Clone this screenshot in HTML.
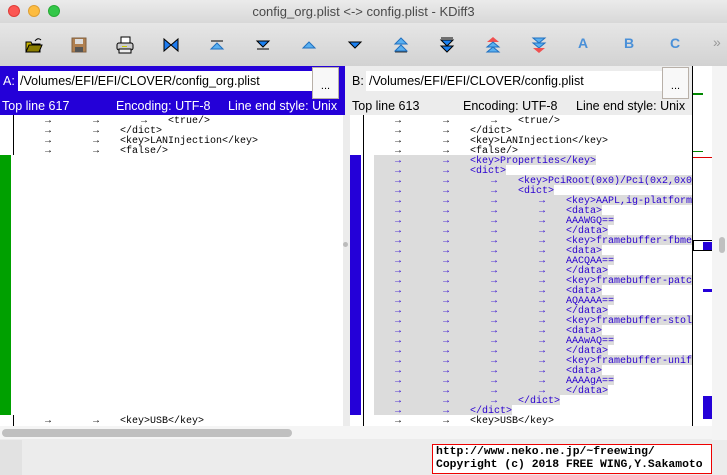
<!DOCTYPE html>
<html><head><meta charset="utf-8"><style>
*{margin:0;padding:0;box-sizing:border-box}
body{width:727px;height:475px;overflow:hidden;background:#ececec;font-family:"Liberation Sans",sans-serif;position:relative}
.abs{position:absolute}
#title{left:0;top:0;width:727px;height:23px;background:linear-gradient(#ebebeb,#d8d8d8);text-align:center;font-size:13px;color:#4a4a4a;line-height:23px}
.dot{position:absolute;top:5px;width:12px;height:12px;border-radius:50%}
#tb{left:0;top:23px;width:727px;height:43px;background:linear-gradient(#e6e6e6,#d2d2d2)}
.ic{position:absolute;top:13px;width:18px;height:18px}
.pane{position:absolute;top:115px;height:311px;overflow:hidden;background:#fff}
.r{position:absolute;white-space:pre;font-family:"Liberation Mono",monospace;font-size:10px;line-height:14px;height:10px;color:#000}
.r i{display:inline-block;width:48px;text-align:center;font-style:normal;font-size:10px;font-weight:bold;vertical-align:top}
.h{background:#dcdcdc;color:#2a00d0}
.hdr{font-size:12.5px;position:absolute;white-space:nowrap}
.in{position:absolute;left:0;top:0;width:100%;height:311px}
</style></head><body>
<div id="title" class="abs">config_org.plist &lt;-&gt; config.plist - KDiff3
<div class="dot" style="left:8px;background:#fc5753;border:1px solid #df3d38"></div>
<div class="dot" style="left:28px;background:#fdbc40;border:1px solid #de9f34"></div>
<div class="dot" style="left:48px;background:#33c748;border:1px solid #27aa35"></div>
</div>
<div id="tb" class="abs">
<svg class="ic" style="left:25px" viewBox="0 0 18 18"><path d="M1 6h5l1 2h8v8H1z" fill="#c8b400" stroke="#000"/><path d="M1 16l3-7h13l-3 7z" fill="#8a7d00" stroke="#000"/><path d="M10 5q3-4 6-1" stroke="#000" fill="none"/></svg>
<svg class="ic" style="left:70px" viewBox="0 0 18 18"><rect x="2" y="2" width="14" height="14" fill="#b08050" stroke="#806040"/><rect x="5" y="3" width="8" height="5" fill="#ddd"/><rect x="5" y="11" width="8" height="5" fill="#555"/></svg>
<svg class="ic" style="left:116px" viewBox="0 0 18 18"><rect x="5" y="1" width="9" height="6" fill="#fff" stroke="#000"/><rect x="1" y="7" width="16" height="7" rx="2" fill="#ccc" stroke="#000"/><rect x="3" y="13" width="12" height="4" fill="#eee" stroke="#000"/><rect x="6" y="10" width="5" height="1" fill="#cc0"/></svg>
<svg class="ic" style="left:162px" viewBox="0 0 18 18"><path d="M2 3v12l7-6zM16 3v12l-7-6z" fill="#1e7cf0" stroke="#000"/></svg>
<svg class="ic" style="left:208px" viewBox="0 0 18 18"><path d="M3 5h12" stroke="#000"/><path d="M9 7l6 6H3z" fill="#5ab0f0" stroke="#2070c0"/></svg>
<svg class="ic" style="left:254px" viewBox="0 0 18 18"><path d="M3 13h12" stroke="#000"/><path d="M3 5h12l-6 6z" fill="#1a80f0" stroke="#000"/></svg>
<svg class="ic" style="left:300px" viewBox="0 0 18 18"><path d="M9 6l6 6H3z" fill="#5ab0f0" stroke="#2070c0"/></svg>
<svg class="ic" style="left:346px" viewBox="0 0 18 18"><path d="M3 6h12l-6 6z" fill="#1a80f0" stroke="#000"/></svg>
<svg class="ic" style="left:392px" viewBox="0 0 18 18"><path d="M9 2l6 6H3zM9 9l6 6H3z" fill="#5ab0f0" stroke="#2070c0"/><path d="M3 16h12" stroke="#333"/></svg>
<svg class="ic" style="left:438px" viewBox="0 0 18 18"><path d="M3 2h12" stroke="#000"/><path d="M3 4h12l-6 6zM3 10h12l-6 6z" fill="#1a80f0" stroke="#000"/></svg>
<svg class="ic" style="left:484px" viewBox="0 0 18 18"><path d="M9 1l6 5H3z" fill="#f05050"/><path d="M9 6l6 5H3zM9 11l6 5H3z" fill="#5ab0f0" stroke="#2070c0"/></svg>
<svg class="ic" style="left:530px" viewBox="0 0 18 18"><path d="M3 2h12l-6 5zM3 7h12l-6 5z" fill="#5ab0f0" stroke="#2070c0"/><path d="M3 12h12l-6 5z" fill="#f05050"/></svg>
<div class="abs" style="left:578px;top:12px;font-size:14px;font-weight:bold;color:#4a90d8">A</div>
<div class="abs" style="left:624px;top:12px;font-size:14px;font-weight:bold;color:#4a90d8">B</div>
<div class="abs" style="left:670px;top:12px;font-size:14px;font-weight:bold;color:#4a90d8">C</div>
<div class="abs" style="left:713px;top:11px;font-size:14px;color:#999">»</div>
</div>
<div class="abs" style="left:0;top:66px;width:345px;height:49px;background:#2400d8"></div>
<div class="hdr" style="left:3px;top:74px;color:#fff">A:</div>
<div class="abs" style="left:18px;top:71px;width:294px;height:20px;background:#fff"></div>
<div class="hdr" style="left:20px;top:74px;color:#000">/Volumes/EFI/EFI/CLOVER/config_org.plist</div>
<div class="abs" style="left:312px;top:67px;width:27px;height:32px;background:#f8f8f8;border:1px solid #b8b0a8;font-size:11px;text-align:center;line-height:36px">...</div>
<div class="hdr" style="left:2px;top:99px;color:#fff">Top line 617</div>
<div class="hdr" style="left:116px;top:99px;color:#fff">Encoding: UTF-8</div>
<div class="hdr" style="left:228px;top:99px;color:#fff">Line end style: Unix</div>
<div class="hdr" style="left:352px;top:74px;color:#000">B:</div>
<div class="abs" style="left:366px;top:71px;width:297px;height:20px;background:#fff"></div>
<div class="hdr" style="left:369px;top:74px;color:#000">/Volumes/EFI/EFI/CLOVER/config.plist</div>
<div class="abs" style="left:662px;top:67px;width:27px;height:32px;background:#f8f8f8;border:1px solid #b8b0a8;font-size:11px;text-align:center;line-height:36px">...</div>
<div class="hdr" style="left:352px;top:99px;color:#000">Top line 613</div>
<div class="hdr" style="left:463px;top:99px;color:#000">Encoding: UTF-8</div>
<div class="hdr" style="left:576px;top:99px;color:#000">Line end style: Unix</div>
<div class="abs" style="left:692px;top:66px;width:1px;height:360px;background:#000"></div>
<div class="abs" style="left:693px;top:66px;width:19px;height:360px;background:#fff"></div>
<div class="abs" style="left:712px;top:66px;width:15px;height:374px;background:#f4f4f4"></div>
<div class="abs" style="left:719px;top:237px;width:6px;height:16px;border-radius:3px;background:#c0c0c0"></div>
<div class="abs" style="left:693px;top:93px;width:10px;height:2px;background:#080"></div>
<div class="abs" style="left:693px;top:151px;width:10px;height:1px;background:#080"></div>
<div class="abs" style="left:693px;top:157px;width:19px;height:1px;background:#d00"></div>
<div class="abs" style="left:693px;top:240px;width:19px;height:11px;border:1px solid #000;border-right:none"></div>
<div class="abs" style="left:703px;top:242px;width:9px;height:8px;background:#2400d8"></div>
<div class="abs" style="left:703px;top:289px;width:9px;height:3px;background:#2400d8"></div>
<div class="abs" style="left:703px;top:396px;width:9px;height:23px;background:#2400d8"></div>
<div class="pane" style="left:0;width:343px">
<div class="abs" style="left:0;top:40px;width:11px;height:260px;background:#00a000"></div>
<div class="abs" style="left:13px;top:0;width:1px;height:40px;background:#000"></div>
<div class="abs" style="left:13px;top:300px;width:1px;height:11px;background:#000"></div>
<div class="in">
<div class="r" style="left:24px;top:0"><i>→</i><i>→</i><i>→</i>&lt;true/&gt;</div>
<div class="r" style="left:24px;top:10px"><i>→</i><i>→</i>&lt;/dict&gt;</div>
<div class="r" style="left:24px;top:20px"><i>→</i><i>→</i>&lt;key&gt;LANInjection&lt;/key&gt;</div>
<div class="r" style="left:24px;top:30px"><i>→</i><i>→</i>&lt;false/&gt;</div>
<div class="r" style="left:24px;top:300px"><i>→</i><i>→</i>&lt;key&gt;USB&lt;/key&gt;</div>
</div></div>
<div class="abs" style="left:343px;top:115px;width:7px;height:311px;background:#ececec"></div>
<div class="abs" style="left:343px;top:242px;width:5px;height:5px;border-radius:50%;background:#bbb"></div>
<div class="pane" style="left:350px;width:342px">
<div class="abs" style="left:0;top:40px;width:11px;height:260px;background:#2400d8"></div>
<div class="abs" style="left:13px;top:0;width:1px;height:311px;background:#000"></div>
<div class="in">
<div class="r" style="left:24px;top:0"><i>→</i><i>→</i><i>→</i>&lt;true/&gt;</div>
<div class="r" style="left:24px;top:10px"><i>→</i><i>→</i>&lt;/dict&gt;</div>
<div class="r" style="left:24px;top:20px"><i>→</i><i>→</i>&lt;key&gt;LANInjection&lt;/key&gt;</div>
<div class="r" style="left:24px;top:30px"><i>→</i><i>→</i>&lt;false/&gt;</div>
<div class="r h" style="left:24px;top:40px"><i>→</i><i>→</i>&lt;key&gt;Properties&lt;/key&gt;</div>
<div class="r h" style="left:24px;top:50px"><i>→</i><i>→</i>&lt;dict&gt;</div>
<div class="r h" style="left:24px;top:60px"><i>→</i><i>→</i><i>→</i>&lt;key&gt;PciRoot(0x0)/Pci(0x2,0x0)&lt;/key&gt;</div>
<div class="r h" style="left:24px;top:70px"><i>→</i><i>→</i><i>→</i>&lt;dict&gt;</div>
<div class="r h" style="left:24px;top:80px"><i>→</i><i>→</i><i>→</i><i>→</i>&lt;key&gt;AAPL,ig-platform-id&lt;/key&gt;</div>
<div class="r h" style="left:24px;top:90px"><i>→</i><i>→</i><i>→</i><i>→</i>&lt;data&gt;</div>
<div class="r h" style="left:24px;top:100px"><i>→</i><i>→</i><i>→</i><i>→</i>AAAWGQ==</div>
<div class="r h" style="left:24px;top:110px"><i>→</i><i>→</i><i>→</i><i>→</i>&lt;/data&gt;</div>
<div class="r h" style="left:24px;top:120px"><i>→</i><i>→</i><i>→</i><i>→</i>&lt;key&gt;framebuffer-fbmem&lt;/key&gt;</div>
<div class="r h" style="left:24px;top:130px"><i>→</i><i>→</i><i>→</i><i>→</i>&lt;data&gt;</div>
<div class="r h" style="left:24px;top:140px"><i>→</i><i>→</i><i>→</i><i>→</i>AACQAA==</div>
<div class="r h" style="left:24px;top:150px"><i>→</i><i>→</i><i>→</i><i>→</i>&lt;/data&gt;</div>
<div class="r h" style="left:24px;top:160px"><i>→</i><i>→</i><i>→</i><i>→</i>&lt;key&gt;framebuffer-patch-enable&lt;/key&gt;</div>
<div class="r h" style="left:24px;top:170px"><i>→</i><i>→</i><i>→</i><i>→</i>&lt;data&gt;</div>
<div class="r h" style="left:24px;top:180px"><i>→</i><i>→</i><i>→</i><i>→</i>AQAAAA==</div>
<div class="r h" style="left:24px;top:190px"><i>→</i><i>→</i><i>→</i><i>→</i>&lt;/data&gt;</div>
<div class="r h" style="left:24px;top:200px"><i>→</i><i>→</i><i>→</i><i>→</i>&lt;key&gt;framebuffer-stolenmem&lt;/key&gt;</div>
<div class="r h" style="left:24px;top:210px"><i>→</i><i>→</i><i>→</i><i>→</i>&lt;data&gt;</div>
<div class="r h" style="left:24px;top:220px"><i>→</i><i>→</i><i>→</i><i>→</i>AAAwAQ==</div>
<div class="r h" style="left:24px;top:230px"><i>→</i><i>→</i><i>→</i><i>→</i>&lt;/data&gt;</div>
<div class="r h" style="left:24px;top:240px"><i>→</i><i>→</i><i>→</i><i>→</i>&lt;key&gt;framebuffer-unifiedmem&lt;/key&gt;</div>
<div class="r h" style="left:24px;top:250px"><i>→</i><i>→</i><i>→</i><i>→</i>&lt;data&gt;</div>
<div class="r h" style="left:24px;top:260px"><i>→</i><i>→</i><i>→</i><i>→</i>AAAAgA==</div>
<div class="r h" style="left:24px;top:270px"><i>→</i><i>→</i><i>→</i><i>→</i>&lt;/data&gt;</div>
<div class="r h" style="left:24px;top:280px"><i>→</i><i>→</i><i>→</i>&lt;/dict&gt;</div>
<div class="r h" style="left:24px;top:290px"><i>→</i><i>→</i>&lt;/dict&gt;</div>
<div class="r" style="left:24px;top:300px"><i>→</i><i>→</i>&lt;key&gt;USB&lt;/key&gt;</div>
</div></div>
<div class="abs" style="left:0;top:426px;width:712px;height:13px;background:#f5f5f5"></div>
<div class="abs" style="left:2px;top:429px;width:290px;height:8px;border-radius:4px;background:#c0c0c0"></div>
<div class="abs" style="left:0;top:440px;width:22px;height:35px;background:#e2e2e2"></div>
<div class="abs" style="left:432px;top:444px;width:280px;height:30px;border:1px solid #e00;background:#fff;font-family:'Liberation Mono',monospace;font-size:11.4px;font-weight:bold;line-height:13px;padding:1px 3px;white-space:pre;color:#000;overflow:hidden">http://www.neko.ne.jp/~freewing/
Copyright (c) 2018 FREE WING,Y.Sakamoto</div>
</body></html>
